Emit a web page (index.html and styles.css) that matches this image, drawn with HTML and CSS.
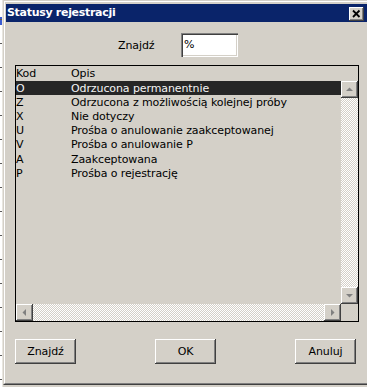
FILE: index.html
```html
<!DOCTYPE html>
<html lang="pl">
<head>
<meta charset="utf-8">
<title>Statusy rejestracji</title>
<link rel="stylesheet" href="styles.css">
</head>
<body>
<div class="screen">
  <div class="strip"></div>
  <div class="dialog">
    <div class="frame">
      <div class="titlebar">
        <span class="title">Statusy rejestracji</span>
        <span class="close">
          <svg width="15" height="14" viewBox="0 0 15 14"><path d="M4 3.5 L10.5 10 M10.5 3.5 L4 10" stroke="#000" stroke-width="1.8" fill="none"/></svg>
        </span>
      </div>
      <div class="find">
        <span class="find-label">Znajdź</span>
        <div class="input">%</div>
      </div>
      <div class="listbox">
        <div class="list-head"><span class="c-kod">Kod</span><span class="c-opis">Opis</span></div>
        <div class="list-mid">
          <div class="rows">
            <div class="row selected"><span class="c-kod">O</span><span class="c-opis">Odrzucona permanentnie</span></div>
            <div class="row"><span class="c-kod">Z</span><span class="c-opis">Odrzucona z możliwością kolejnej próby</span></div>
            <div class="row"><span class="c-kod">X</span><span class="c-opis">Nie dotyczy</span></div>
            <div class="row"><span class="c-kod">U</span><span class="c-opis">Prośba o anulowanie zaakceptowanej</span></div>
            <div class="row"><span class="c-kod">V</span><span class="c-opis">Prośba o anulowanie P</span></div>
            <div class="row"><span class="c-kod">A</span><span class="c-opis">Zaakceptowana</span></div>
            <div class="row"><span class="c-kod">P</span><span class="c-opis">Prośba o rejestrację</span></div>
          </div>
          <div class="vscroll">
            <div class="sbtn"><svg width="15" height="15" viewBox="0 0 15 15"><path d="M4 9 L11 9 L7.5 5.5 Z" fill="#808080"/></svg></div>
            <div class="track"></div>
            <div class="sbtn"><svg width="15" height="15" viewBox="0 0 15 15"><path d="M4 6 L11 6 L7.5 9.5 Z" fill="#808080"/></svg></div>
          </div>
        </div>
        <div class="list-bot">
          <div class="hscroll">
            <div class="sbtn"><svg width="15" height="15" viewBox="0 0 15 15"><path d="M9 4 L9 11 L5.5 7.5 Z" fill="#808080"/></svg></div>
            <div class="track"></div>
            <div class="sbtn"><svg width="15" height="15" viewBox="0 0 15 15"><path d="M6 4 L6 11 L9.5 7.5 Z" fill="#808080"/></svg></div>
          </div>
          <div class="corner"></div>
        </div>
      </div>
      <div class="buttons">
        <div class="btn">Znajdź</div>
        <div class="btn">OK</div>
        <div class="btn">Anuluj</div>
      </div>
    </div>
  </div>
</div>
</body>
</html>
```
FILE: styles.css
```css
html, body {
  margin: 0;
  padding: 0;
  background: #d4d0c8;
}
.screen {
  width: 367px;
  height: 387px;
  overflow: hidden;
  display: flex;
  align-items: flex-start;
  background: #d4d0c8;
  font-family: "DejaVu Sans", "Liberation Sans", sans-serif;
  font-size: 11px;
  letter-spacing: -0.1px;
  color: #000;
}
.strip {
  width: 3px;
  height: 387px;
  flex: none;
  background:
    repeating-linear-gradient(to bottom, transparent 0 19px, #5a5a5a 19px 20px, transparent 20px 24px) 0 0 / 2px 100% no-repeat,
    linear-gradient(to bottom, #fff 0 17px, #3a5bd0 17px 25px, #fff 25px) 0 0 / 2px 100% no-repeat,
    #e8e6e0;
}
.dialog {
  flex: 1;
  height: 385px;
  box-sizing: border-box;
  display: flex;
  border-top: 1px solid #d4d0c8;
  border-left: 1px solid #d4d0c8;
  border-bottom: 1px solid #404040;
}
.frame {
  flex: 1;
  display: flex;
  flex-direction: column;
  border-top: 1px solid #fff;
  border-left: 1px solid #fff;
  border-bottom: 1px solid #808080;
  padding: 2px 0 0 1px;
}
.titlebar {
  height: 18px;
  background: #0a246a;
  display: flex;
  align-items: flex-start;
  justify-content: space-between;
}
.title {
  color: #fff;
  font-weight: bold;
  font-size: 11px;
  letter-spacing: -0.3px;
  line-height: 18px;
  padding-left: 1px;
}
.close {
  width: 15px;
  height: 14px;
  margin-top: 3px;
  margin-right: 3px;
  box-sizing: border-box;
  background: #d4d0c8;
  display: flex;
}
.close svg, .sbtn svg {
  display: block;
}
.close, .sbtn, .btn {
  box-shadow: inset -1px -1px #404040, inset 1px 1px #fff, inset -2px -2px #808080;
}
.find {
  margin-top: 11px;
  height: 24px;
  display: flex;
  align-items: center;
  padding-left: 112px;
}
.find-label {
  width: 63px;
}
.input {
  width: 57px;
  height: 24px;
  box-sizing: border-box;
  background: #fff;
  box-shadow: inset 1px 1px #808080, inset 2px 2px #404040, inset -1px -1px #fff, inset -2px -2px #d4d0c8;
  padding: 0 3px;
  line-height: 23px;
}
.listbox {
  margin: 8px 0 0 9px;
  width: 344px;
  height: 257px;
  box-sizing: border-box;
  border: 1px solid #000;
  display: flex;
  flex-direction: column;
}
.list-head {
  height: 15px;
  display: flex;
  align-items: center;
}
.c-kod {
  width: 55px;
  flex: none;
}
.c-opis {
  white-space: nowrap;
}
.list-mid {
  height: 223px;
  display: flex;
}
.rows {
  width: 325px;
  display: flex;
  flex-direction: column;
}
.row {
  height: 14.2px;
  display: flex;
  align-items: center;
}
.row.selected {
  background: #262626;
  color: #f4f4f4;
}
.vscroll {
  width: 17px;
  display: flex;
  flex-direction: column;
}
.sbtn {
  width: 17px;
  height: 17px;
  flex: none;
  background: #d4d0c8;
  display: flex;
  align-items: center;
  justify-content: center;
}
.track {
  flex: 1;
  background: repeating-conic-gradient(#fff 0 25%, #d4d0c8 0 50%) 0 0 / 2px 2px;
}
.list-bot {
  height: 17px;
  display: flex;
}
.hscroll {
  width: 325px;
  display: flex;
}
.corner {
  flex: 1;
  background: #d4d0c8;
}
.buttons {
  margin: 17px 0 0 9px;
  width: 341px;
  display: flex;
  justify-content: space-between;
}
.btn {
  width: 61px;
  height: 25px;
  background: #d4d0c8;
  display: flex;
  align-items: center;
  justify-content: center;
}
```
